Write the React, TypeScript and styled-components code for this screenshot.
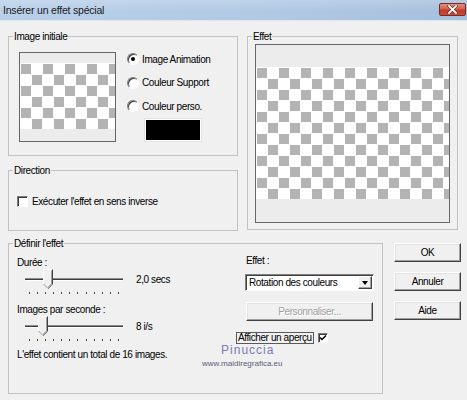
import React from "react";
import styled, { createGlobalStyle } from "styled-components";

const FONT = `"Liberation Sans", Arial, sans-serif`;

const Global = createGlobalStyle`
  html, body { margin: 0; padding: 0; background: #f0f0f0; }
  body { font-family: ${FONT}; font-size: 10px; letter-spacing: -0.4px; color: #000; }
  * { box-sizing: border-box; }
`;

const Window = styled.div`
  width: 467px;
  height: 400px;
  background: #f0f0f0;
  display: flex;
  flex-direction: column;
  overflow: hidden;
`;

const TitleBar = styled.div`
  height: 21px;
  flex: none;
  display: flex;
  align-items: center;
  justify-content: space-between;
  padding: 0 1px 1px 3px;
  background: linear-gradient(180deg, rgba(255, 255, 255, 0.18), rgba(255, 255, 255, 0) 60%),
    linear-gradient(90deg, #bad0e9 0%, #b0c8e4 60%, #a6bfdc 100%);
  border-bottom: 1px solid #dce6f2;
`;

const Title = styled.div`
  font-size: 10.5px;
  letter-spacing: -0.2px;
  color: #1a1a1a;
  line-height: 14px;
`;

const CloseButton = styled.div`
  width: 27px;
  height: 13px;
  border: 1px solid #7a2a22;
  border-radius: 2px;
  background: linear-gradient(180deg, #e0907f 0%, #d2604f 45%, #bf3826 55%, #c94a38 100%);
  display: flex;
  align-items: center;
  justify-content: center;
`;

const Body = styled.div`
  flex: 1;
  display: flex;
  flex-direction: column;
  padding: 9px 0 0 8px;
`;

const TopRow = styled.div`
  display: flex;
  gap: 9px;
  align-items: flex-start;
`;

const Column = styled.div`
  display: flex;
  flex-direction: column;
  gap: 8px;
  width: 230px;
`;

const Group = styled.fieldset<{ $w: number; $h: number }>`
  margin: 0;
  padding: 0;
  min-width: 0;
  width: ${(p) => p.$w}px;
  height: ${(p) => p.$h}px;
  border: 1px solid #c2c2c2;
  flex: none;
`;

const Legend = styled.legend`
  margin-left: 4px;
  padding: 0 1px;
  line-height: 13px;
  font-size: 10px;
`;

const GroupContent = styled.div<{ $pt: number; $pl: number }>`
  display: flex;
  padding: ${(p) => p.$pt}px 0 0 ${(p) => p.$pl}px;
`;

const Preview = styled.div<{ $w: number; $h: number }>`
  width: ${(p) => p.$w}px;
  height: ${(p) => p.$h}px;
  flex: none;
  border: 1px solid #666;
  display: flex;
  flex-direction: column;
  background: #ededed;
`;

const Band = styled.div<{ $h: number }>`
  height: ${(p) => p.$h}px;
  flex: none;
  background: #ececec;
`;

const Checker = styled.div<{ $h: number }>`
  height: ${(p) => p.$h}px;
  flex: none;
  background-color: #fff;
  background-image: linear-gradient(90deg, #fff 1px, transparent 1px),
    linear-gradient(#fff 1px, transparent 1px),
    conic-gradient(#fff 0 25%, #b3b3b3 0 50%, #fff 0 75%, #b3b3b3 0);
  background-size: 11px 11px, 11px 11px, 22px 22px;
`;

const RadioList = styled.div`
  display: flex;
  flex-direction: column;
  margin-left: 11px;
`;

const RadioRow = styled.div`
  display: flex;
  align-items: center;
  gap: 3px;
  height: 14px;
  line-height: 13px;
  & + & {
    margin-top: 9.5px;
  }
`;

const Radio = styled.span<{ $on?: boolean }>`
  width: 12px;
  height: 12px;
  flex: none;
  border-radius: 50%;
  border: 1px solid;
  border-color: #7a7a7a #fff #fff #7a7a7a;
  box-shadow: inset 1px 1px 0 #3c3c3c;
  background: #fff;
  display: flex;
  align-items: center;
  justify-content: center;
  &::after {
    content: "";
    width: 4px;
    height: 4px;
    border-radius: 50%;
    background: ${(p) => (p.$on ? "#000" : "transparent")};
  }
`;

const Swatch = styled.div`
  width: 56px;
  height: 22px;
  margin: 6px 0 0 18px;
  background: #000;
  border: 1px solid #fff;
  box-shadow: 0 0 0 1px #e2e2e2;
`;

const CheckRow = styled.div`
  display: flex;
  align-items: center;
  gap: 4px;
  height: 13px;
  line-height: 13px;
`;

const CheckBox = styled.span<{ $size: number }>`
  width: ${(p) => p.$size}px;
  height: ${(p) => p.$size}px;
  flex: none;
  background: #fff;
  border: 1px solid;
  border-color: #7a7a7a #fff #fff #7a7a7a;
  box-shadow: inset 1px 1px 0 #3c3c3c;
  display: flex;
  align-items: center;
  justify-content: center;
`;

const BottomRow = styled.div`
  display: flex;
  gap: 11px;
  align-items: flex-start;
  margin-top: 6px;
`;

const DefineGrid = styled.div`
  position: relative;
  display: grid;
  grid-template-columns: 228px 129px;
  padding-left: 8px;
`;

const LeftPane = styled.div`
  display: flex;
  flex-direction: column;
  padding-top: 6px;
`;

const RightPane = styled.div`
  display: flex;
  flex-direction: column;
  align-items: flex-start;
  padding-top: 4px;
`;

const Label = styled.div<{ $mt?: number; $ml?: number }>`
  line-height: 13px;
  height: 13px;
  margin-top: ${(p) => p.$mt ?? 0}px;
  margin-left: ${(p) => p.$ml ?? 0}px;
  white-space: nowrap;
`;

const SliderRow = styled.div`
  display: flex;
  height: 26px;
`;

const Trackbar = styled.div`
  position: relative;
  width: 106px;
  margin-left: 4px;
  display: flex;
  flex-direction: column;
`;

const Groove = styled.div`
  margin: 9px 4px 0 4px;
  height: 3px;
  border-top: 1px solid #8c8c8c;
  background: #3f3f3f;
  border-bottom: 1px solid #fff;
`;

const Ticks = styled.div`
  display: flex;
  justify-content: space-between;
  margin: 11px 8px 0 8px;
`;

const Tick = styled.span`
  width: 1px;
  height: 2px;
  background: #4a4a4a;
`;

const ThumbWrap = styled.div<{ $left: number }>`
  position: absolute;
  top: 0;
  left: ${(p) => p.$left}px;
  width: 10px;
  height: 20px;
`;

const Value = styled.div`
  margin: 4px 0 0 9px;
  line-height: 13px;
  white-space: nowrap;
`;

const Combo = styled.div`
  width: 129px;
  height: 17px;
  margin-top: 7px;
  display: flex;
  align-items: center;
  justify-content: space-between;
  background: #fff;
  border: 1px solid;
  border-color: #808080 #fff #fff #808080;
  box-shadow: inset 1px 1px 0 #404040;
  padding: 0 1px 0 3px;
  line-height: 13px;
`;

const ComboArrow = styled.div`
  width: 14px;
  height: 13px;
  background: #f0f0f0;
  border: 1px solid;
  border-color: #fff #404040 #404040 #fff;
  box-shadow: inset -1px -1px 0 #a0a0a0;
  display: flex;
  align-items: center;
  justify-content: center;
  &::after {
    content: "";
    border-left: 3.5px solid transparent;
    border-right: 3.5px solid transparent;
    border-top: 4px solid #000;
  }
`;

const Button = styled.div<{ $w: number; $mt?: number; $ml?: number; $disabled?: boolean }>`
  width: ${(p) => p.$w}px;
  height: 19px;
  flex: none;
  margin-top: ${(p) => p.$mt ?? 0}px;
  margin-left: ${(p) => p.$ml ?? 0}px;
  background: #f0f0f0;
  border: 1px solid;
  border-color: #fff #404040 #404040 #fff;
  box-shadow: inset -1px -1px 0 #a0a0a0, inset 1px 1px 0 #e3e3e3;
  display: flex;
  align-items: center;
  justify-content: center;
  line-height: 13px;
  color: ${(p) => (p.$disabled ? "#a0a0a0" : "#000")};
  text-shadow: ${(p) => (p.$disabled ? "1px 1px 0 #fff" : "none")};
`;

const PreviewToggle = styled.div`
  display: flex;
  align-items: center;
  gap: 4px;
  margin: 11px 0 0 -9px;
`;

const BoxedText = styled.span`
  border: 1px solid #5a5a5a;
  padding: 0 1px;
  height: 12px;
  line-height: 10px;
  white-space: nowrap;
`;

const ButtonColumn = styled.div`
  display: flex;
  flex-direction: column;
  gap: 10px;
  margin-top: 6px;
`;

const Watermark = styled.div`
  position: absolute;
  left: 193px;
  top: 93px;
  display: flex;
  flex-direction: column;
  align-items: center;
  font-family: "Liberation Sans", Arial, sans-serif;
  letter-spacing: 0;
  pointer-events: none;
`;

const WatermarkName = styled.div`
  font-size: 12px;
  line-height: 14px;
  letter-spacing: 1px;
  margin-left: 11px;
  color: #7a7ab6;
`;

const WatermarkUrl = styled.div`
  font-size: 8px;
  line-height: 9px;
  color: #5c5c78;
  margin-top: 2px;
`;

const Thumb = () => (
  <svg width="10" height="20" viewBox="0 0 10 20">
    <polygon points="0,0 10,0 10,15 5,20 0,15" fill="#f0f0f0" />
    <polyline points="0.5,15 0.5,0.5 9.5,0.5" fill="none" stroke="#fff" strokeWidth="1" />
    <polyline points="9.5,0.5 9.5,15.2 5,19.6" fill="none" stroke="#404040" strokeWidth="1" />
    <polyline points="0.5,15 5,19.5" fill="none" stroke="#9a9a9a" strokeWidth="1" />
    <polyline points="8.5,1.5 8.5,14.8 5,18.3" fill="none" stroke="#a0a0a0" strokeWidth="1" />
  </svg>
);

const Slider = ({ thumb }: { thumb: number }) => (
  <Trackbar>
    <Groove />
    <Ticks>
      {Array.from({ length: 12 }).map((_, i) => (
        <Tick key={i} />
      ))}
    </Ticks>
    <ThumbWrap $left={thumb}>
      <Thumb />
    </ThumbWrap>
  </Trackbar>
);

const CheckMark = () => (
  <svg width="8" height="8" viewBox="0 0 8 8">
    <polyline points="1,3.5 3,5.5 7,1.5" fill="none" stroke="#000" strokeWidth="1.5" />
  </svg>
);

export default function App() {
  return (
    <>
      <Global />
      <Window>
        <TitleBar>
          <Title>Insérer un effet spécial</Title>
          <CloseButton>
            <svg width="11" height="9" viewBox="0 0 11 9">
              <path d="M2 1 L9 8 M9 1 L2 8" stroke="#5a1e18" strokeWidth="3" strokeLinecap="square" />
              <path d="M2 1 L9 8 M9 1 L2 8" stroke="#fff" strokeWidth="1.8" strokeLinecap="square" />
            </svg>
          </CloseButton>
        </TitleBar>
        <Body>
          <TopRow>
            <Column>
              <Group $w={230} $h={126}>
                <Legend>Image initiale</Legend>
                <GroupContent $pt={9} $pl={10}>
                  <Preview $w={97} $h={90}>
                    <Band $h={10} />
                    <Checker $h={66} />
                    <Band $h={12} />
                  </Preview>
                  <RadioList>
                    <RadioRow>
                      <Radio $on />
                      <span>Image Animation</span>
                    </RadioRow>
                    <RadioRow>
                      <Radio />
                      <span>Couleur Support</span>
                    </RadioRow>
                    <RadioRow>
                      <Radio />
                      <span>Couleur perso.</span>
                    </RadioRow>
                    <Swatch />
                  </RadioList>
                </GroupContent>
              </Group>
              <Group $w={230} $h={67}>
                <Legend>Direction</Legend>
                <GroupContent $pt={18} $pl={8}>
                  <CheckRow>
                    <CheckBox $size={11} />
                    <span>Exécuter l'effet en sens inverse</span>
                  </CheckRow>
                </GroupContent>
              </Group>
            </Column>
            <Group $w={211} $h={200}>
              <Legend>Effet</Legend>
              <GroupContent $pt={1} $pl={7}>
                <Preview $w={195} $h={179}>
                  <Band $h={22} />
                  <Checker $h={132} />
                  <Band $h={23} />
                </Preview>
              </GroupContent>
            </Group>
          </TopRow>
          <BottomRow>
            <Group $w={375} $h={157}>
              <Legend>Définir l'effet</Legend>
              <DefineGrid>
                <LeftPane>
                  <Label>Durée :</Label>
                  <SliderRow>
                    <Slider thumb={22} />
                    <Value>2,0 secs</Value>
                  </SliderRow>
                  <Label $mt={8}>Images par seconde :</Label>
                  <SliderRow>
                    <Slider thumb={17} />
                    <Value>8 i/s</Value>
                  </SliderRow>
                  <Label $mt={6}>L'effet contient un total de 16 images.</Label>
                </LeftPane>
                <RightPane>
                  <Label $ml={1}>Effet :</Label>
                  <Combo>
                    <span>Rotation des couleurs</span>
                    <ComboArrow />
                  </Combo>
                  <Button $w={127} $mt={11} $ml={1} $disabled>
                    Personnaliser...
                  </Button>
                  <PreviewToggle>
                    <BoxedText>Afficher un aperçu</BoxedText>
                    <CheckBox $size={10}>
                      <CheckMark />
                    </CheckBox>
                  </PreviewToggle>
                </RightPane>
                <Watermark>
                  <WatermarkName>Pinuccia</WatermarkName>
                  <WatermarkUrl>www.maidiregrafica.eu</WatermarkUrl>
                </Watermark>
              </DefineGrid>
            </Group>
            <ButtonColumn>
              <Button $w={67}>OK</Button>
              <Button $w={67}>Annuler</Button>
              <Button $w={67}>Aide</Button>
            </ButtonColumn>
          </BottomRow>
        </Body>
      </Window>
    </>
  );
}
